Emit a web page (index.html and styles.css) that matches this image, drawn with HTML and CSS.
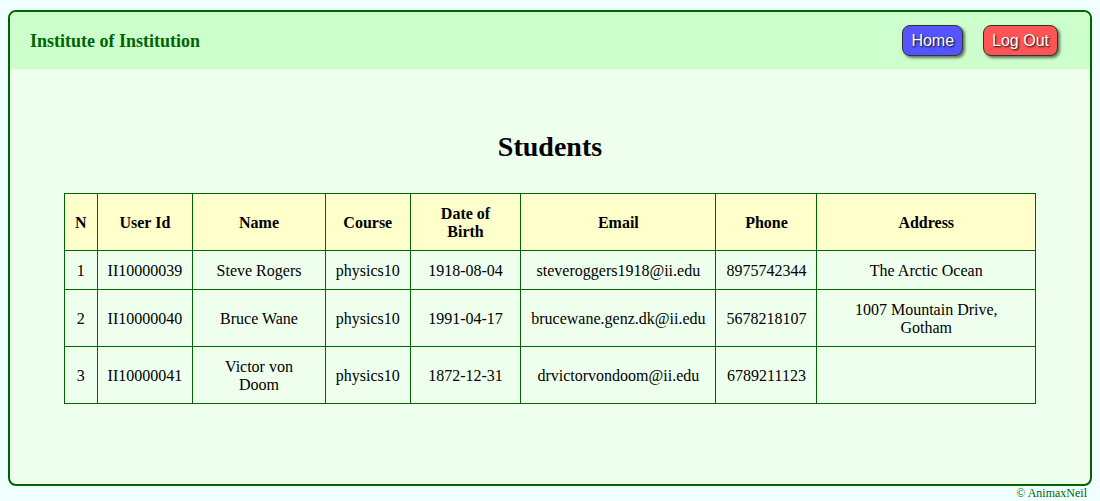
FILE: index.html
```html
<!DOCTYPE html>
<html lang="en">
<head>
<meta charset="utf-8">
<title>Students</title>
<link rel="stylesheet" href="styles.css">
</head>
<body>
<div class="frame">
  <header class="topbar">
    <div class="brand">Institute of Institution</div>
    <nav class="actions">
      <a class="btn btn-home" href="#">Home</a>
      <a class="btn btn-logout" href="#">Log Out</a>
    </nav>
  </header>
  <main class="content">
    <h1 class="title">Students</h1>
    <table class="students">
      <thead>
        <tr>
          <th>N</th>
          <th>User Id</th>
          <th>Name</th>
          <th>Course</th>
          <th>Date of Birth</th>
          <th>Email</th>
          <th>Phone</th>
          <th>Address</th>
        </tr>
      </thead>
      <tbody>
        <tr>
          <td>1</td>
          <td>II10000039</td>
          <td>Steve Rogers</td>
          <td>physics10</td>
          <td>1918-08-04</td>
          <td>steveroggers1918@ii.edu</td>
          <td>8975742344</td>
          <td>The Arctic Ocean</td>
        </tr>
        <tr>
          <td>2</td>
          <td>II10000040</td>
          <td>Bruce Wane</td>
          <td>physics10</td>
          <td>1991-04-17</td>
          <td>brucewane.genz.dk@ii.edu</td>
          <td>5678218107</td>
          <td>1007 Mountain Drive, Gotham</td>
        </tr>
        <tr>
          <td>3</td>
          <td>II10000041</td>
          <td>Victor von Doom</td>
          <td>physics10</td>
          <td>1872-12-31</td>
          <td>drvictorvondoom@ii.edu</td>
          <td>6789211123</td>
          <td></td>
        </tr>
      </tbody>
    </table>
  </main>
</div>
<footer class="credit">© AnimaxNeil</footer>
</body>
</html>
```

FILE: styles.css
```css
html, body {
  background: #f0ffff;
}
body {
  margin: 8px;
  font-family: "Liberation Serif", "Times New Roman", serif;
  font-size: 16px;
  color: #000;
}
.frame {
  margin-top: 2px;
  height: 476px;
  box-sizing: border-box;
  border: 2px solid #006400;
  border-radius: 8px;
  background: #eeffee;
  overflow: hidden;
  display: flex;
  flex-direction: column;
}
.topbar {
  height: 57px;
  flex: none;
  background: #ccffcc;
  display: flex;
  align-items: center;
  justify-content: space-between;
  padding: 0 32px 0 20px;
}
.brand {
  font-size: 18px;
  font-weight: bold;
  color: #006400;
  padding-top: 2px;
}
.actions {
  display: flex;
  gap: 20px;
  align-items: center;
}
.btn {
  font-family: "Liberation Sans", Arial, sans-serif;
  font-size: 16px;
  line-height: 18px;
  color: #fff;
  text-decoration: none;
  padding: 6px 8px 5px;
  border: 1px solid #333;
  border-radius: 8px;
  box-shadow: 2px 2px 3px rgba(0, 0, 0, 0.55);
  text-shadow: 1px 1px 2px #000;
}
.btn-home {
  background: #5555ff;
}
.btn-logout {
  background: #ff5555;
}
.content {
  flex: 1;
  padding-top: 62px;
}
.title {
  margin: 0 0 30px;
  text-align: center;
  font-size: 28px;
  line-height: 32px;
  font-weight: bold;
}
.students {
  width: 90%;
  margin: 0 auto;
  border-collapse: collapse;
}
.students th,
.students td {
  border: 1px solid #006400;
  padding: 11px 10px 9px;
  text-align: center;
  line-height: 18px;
}
.students th {
  background: #ffffcc;
  font-weight: bold;
}
.credit {
  text-align: right;
  font-size: 12px;
  color: #006400;
  line-height: 14px;
  padding-right: 5px;
}
```
